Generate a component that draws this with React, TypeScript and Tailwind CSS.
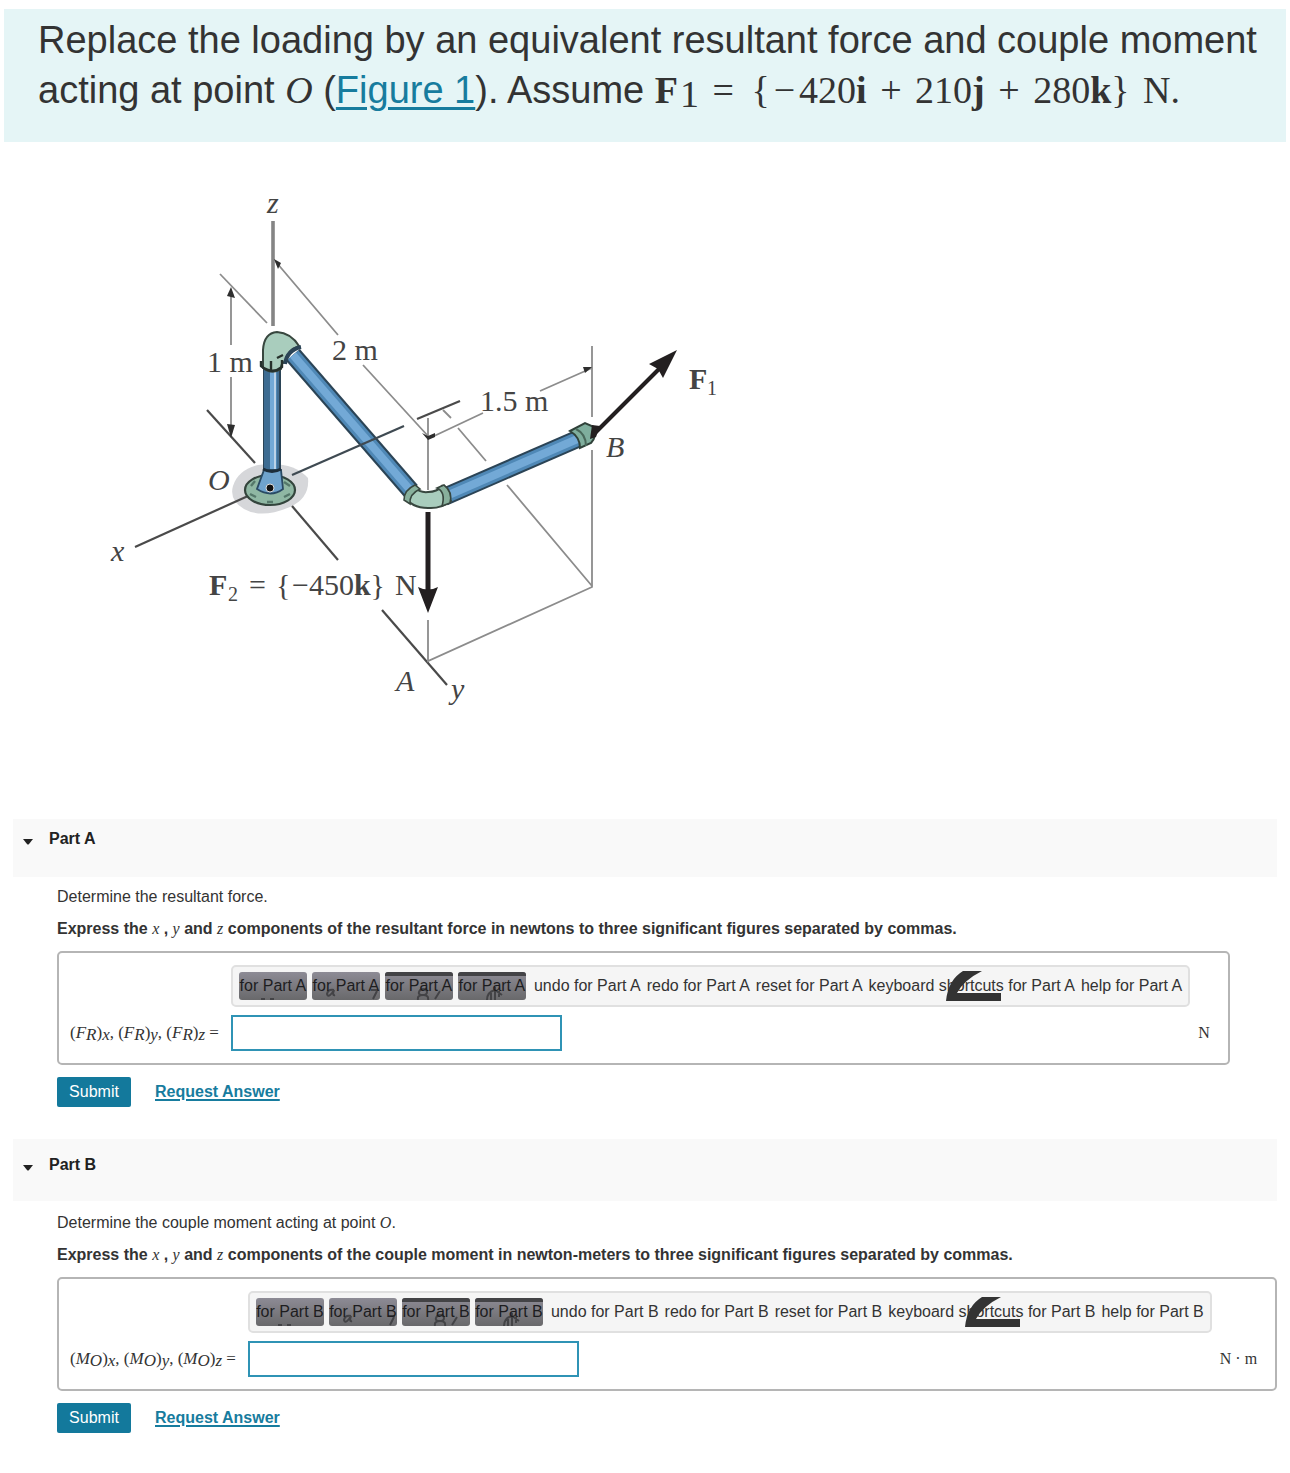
import React, { useState } from "react";

type Part = {
  id: string;
  prompt: React.ReactNode;
  quantity: string;
  units: string;
  symbol: string;
  sub: string;
  unit: string;
  headClass: string;
  bodyClass: string;
};

const serif = "font-['Liberation_Serif',serif]";

const Var: React.FC<{ children: React.ReactNode }> = ({ children }) => (
  <i className="font-['Liberation_Serif',serif] font-normal">{children}</i>
);

// pipe drawn as an outlined thick line with a highlight on top
const Pipe: React.FC<{ x1: number; y1: number; x2: number; y2: number }> = (p) => (
  <g>
    <line {...p} stroke="#2b4456" strokeWidth="18" />
    <line {...p} stroke="#4f88b6" strokeWidth="14" />
    <line {...p} stroke="#73a9d6" strokeWidth="8" />
  </g>
);

const Figure = () => (
  <svg
    viewBox="100 180 630 540"
    className="ml-[100px] h-[540px] w-[630px]"
    role="img"
    aria-label="Figure 1"
    fontFamily="'Liberation Serif', serif"
    fontSize="30"
    fill="#444"
  >
    <path
      d="M233 486 Q238 470 258 465 Q292 460 308 478 Q310 498 290 507 Q262 519 244 509 Q229 500 233 486Z"
      fill="#d6d7da"
    />

    {/* axes */}
    <g stroke="#4a4a4a" strokeWidth="2.2" fill="none">
      <path d="M135 547 L248 496" />
      <path d="M292 506 L338 560" />
      <path d="M382 610 L447 685" />
      <path d="M207 410 L255 463" />
      <path d="M417 419 L460 401" />
    </g>
    <path d="M273 221 V326" stroke="#858585" strokeWidth="3.6" />

    {/* dimension and construction lines */}
    <g stroke="#8c8c8c" strokeWidth="1.8" fill="none">
      <path d="M220 274 L267 323" />
      <path d="M231 290 V345 M231 377 V432" />
      <path d="M276 262 L338 335 M363 365 L428 436" />
      <path d="M428 418 V490 M428 620 V661 L592 587 V450 M592 346 V417" />
      <path d="M432 437 L483 413 M540 391 L592 368" />
      <path d="M443 410 L451 418 M458 428 L486 461 M507 485 L592 586" />
    </g>
    <g fill="#2e2e2e">
      <path d="M231 287 L235 298 L227 296Z" />
      <path d="M231 438 L235 425 L227 424Z" />
      <path d="M274 259 L281 263 L278 269Z" />
      <path d="M592 367 L583 367 L585 373Z" />
      <path d="M422 433 L428 436 L435 433 L435 437 L428 440Z" />
    </g>

    <Pipe x1={272} y1={366} x2={272} y2={472} />
    <path d="M267 370 V470" stroke="#3d6c92" strokeWidth="6" />
    <path d="M275 370 V470" stroke="#bcd3e8" strokeWidth="2" />
    <path d="M278 370 V470" stroke="#426f95" strokeWidth="2" />
    <Pipe x1={293} y1={355} x2={411} y2={491} />
    <Pipe x1={444} y1={497} x2={582} y2={437} />
    <path d="M292 475 L404 426" stroke="#3f4a52" strokeWidth="2.2" />

    {/* top elbow */}
    <path
      d="M263 368 V350 Q264 333 277 332 Q291 333 299 346 Q287 350 285 362 Q281 362 281 369 Q272 375 263 368Z"
      fill="#a9cdbd"
      stroke="#38473f"
      strokeWidth="2"
    />
    <path d="M285 364 Q287 350 301 347" fill="none" stroke="#2b4456" strokeWidth="4" />
    <path
      d="M261 361 V366 Q272 375 282 367 V360 M271 361 V371 M277 358 L283 355"
      fill="none"
      stroke="#26312c"
      strokeWidth="2.4"
    />

    {/* floor flange */}
    <ellipse cx="270" cy="490" rx="25" ry="15" fill="#8fb7a3" stroke="#33443c" strokeWidth="2.2" />
    <path
      d="M251 486 L255 481 M250 494 L256 497 M284 497 L290 494 M284 482 L290 486 M267 502 H273"
      stroke="#55786a"
      strokeWidth="2.4"
    />
    <path d="M264 470 H281 L283 489 Q271 498 257 489Z" fill="#6fa3cd" stroke="#2a4a63" strokeWidth="1.8" />
    <path d="M263 469 Q272 474 281 469" fill="none" stroke="#1d2d3a" strokeWidth="3" />
    <circle cx="270" cy="488" r="4" fill="#111" stroke="#ddd" strokeWidth="1" />

    {/* lower elbow */}
    <path
      d="M414 487 Q420 493 428 492 Q437 492 442 486 L451 501 Q441 509 428 508 Q411 508 405 496Z"
      fill="#a9cdbd"
      stroke="#38473f"
      strokeWidth="2"
    />
    <path
      d="M415 485 Q404 490 404 500 L410 504 Q409 494 420 489Z M437 488 Q446 492 442 506 L450 503 Q453 492 444 485Z"
      fill="#88b09c"
      stroke="#38473f"
      strokeWidth="1.6"
    />

    {/* end cap at B */}
    <path
      d="M570 431 L585 423 L594 427 Q597 437 591 443 L580 448 Q580 437 570 431Z"
      fill="#7fae9d"
      stroke="#30423a"
      strokeWidth="2"
    />
    <path d="M576 429 Q586 434 586 446" fill="none" stroke="#49685a" strokeWidth="2" />

    {/* forces */}
    <g fill="#231f20" stroke="#231f20">
      <path d="M428 512 V590" strokeWidth="5" />
      <path d="M418 587 Q428 592 438 587 L428 613Z" strokeWidth="0" />
      <path d="M595 433 L662 366" strokeWidth="4" />
      <path d="M677 350 L649 364 L658 369 L663 378Z" strokeWidth="0" />
      <path d="M592 425 L600 426 L596 437 L590 439Z" strokeWidth="0" />
    </g>

    <g fontStyle="italic">
      <text x="267" y="213">z</text>
      <text x="111" y="561">x</text>
      <text x="208" y="490">O</text>
      <text x="606" y="457">B</text>
      <text x="396" y="691">A</text>
      <text x="451" y="699">y</text>
    </g>
    <text x="207" y="372">1 m</text>
    <text x="332" y="360">2 m</text>
    <text x="480" y="411">1.5 m</text>
    <text x="689" y="389" fontWeight="bold">F</text>
    <text x="707" y="395" fontSize="20">1</text>
    <text x="209" y="595" fontWeight="bold">F</text>
    <text x="228" y="601" fontSize="20">2</text>
    <text x="249" y="595">=</text>
    <text x="276" y="595">{"{"}</text>
    <text x="292" y="595">−450<tspan fontWeight="bold">k</tspan>{"}"}</text>
    <text x="395" y="595">N</text>
  </svg>
);

// leftovers of the template icons that show through the toolbar buttons
const marks = [
  <path d="M22 27 h4 M31 27 h4" />,
  <path d="M22 18 q-6 -1 -7 4 q1 4 5 -1 l2 -3 q-2 6 1 5 M59 18 h7 M65 19 l-4 8" />,
  <>
    <path d="M0 2 H68" strokeWidth="4" />
    <path d="M33 28 q-1 -5 5 -5 q6 0 5 5 M38 23 q-5 0 -4 -3 q1 -3 4 -3 q4 0 4 3 q0 3 -4 3 M55 19 l-5 8" />
  </>,
  <>
    <path d="M0 2 H68" strokeWidth="4" />
    <path d="M29 28 q0 -8 8 -10 l7 5 M37 15 v13 M33 28 v-7 M41 19 v6" />
  </>,
];

const Toolbar: React.FC<{ name: string }> = ({ name }) => (
  <div className="flex h-[42px] items-center rounded-[5px] border-2 border-[#e0e0e0] bg-[#f5f5f5] px-1.5 whitespace-nowrap text-[#333]">
    <div className="mr-2 flex gap-[5px]">
      {marks.map((mark, i) => (
        <button
          key={i}
          type="button"
          className="relative flex h-7 w-17 items-center justify-center overflow-hidden rounded-[3px] bg-linear-to-b from-[#8d8b95] to-[#69696b] text-[#1d1d1f]"
        >
          <svg
            viewBox="0 0 68 28"
            className="absolute inset-0 h-full w-full"
            fill="none"
            stroke="#434346"
            strokeWidth="2"
          >
            {mark}
          </svg>
          <span className="relative">for {name}</span>
        </button>
      ))}
    </div>
    <div className="flex gap-1.5">
      <button type="button">undo for {name}</button>
      <button type="button">redo for {name}</button>
      <button type="button">reset for {name}</button>
      <button type="button" className="relative">
        <svg viewBox="0 0 55 30" className="absolute -top-[3px] left-[77px] h-[30px] w-[55px]" fill="#333">
          <path d="M0 30 Q2 9 17 0 H36 Q18 9 11 22 H55 V30Z" />
        </svg>
        <span className="relative">keyboard shortcuts for {name}</span>
      </button>
      <button type="button">help for {name}</button>
    </div>
  </div>
);

const Component: React.FC<{ symbol: string; sub: string; axis: string }> = ({ symbol, sub, axis }) => (
  <>
    (<i>{symbol}</i>
    <i className="relative top-0.5">{sub}</i>)<i className="relative top-0.5">{axis}</i>
  </>
);

const PartSection: React.FC<{ part: Part }> = ({ part }) => {
  const [open, setOpen] = useState(true);
  const [answer, setAnswer] = useState("");
  const name = "Part " + part.id;

  return (
    <section>
      <h2 className={part.headClass}>
        <button type="button" className="flex items-center gap-4 font-bold text-[#222]" onClick={() => setOpen(!open)}>
          <svg viewBox="0 0 10 6" className="mt-1.5 h-1.5 w-2.5" fill="#222">
            <path d="M0 0 H10 L6 5 Q5 6 4 5Z" />
          </svg>
          {name}
        </button>
      </h2>
      {open && (
        <div className={part.bodyClass}>
          <p className="mb-2">{part.prompt}</p>
          <p className="mb-2.5 font-bold">
            Express the <Var>x</Var> , <Var>y</Var> and <Var>z</Var> components of the {part.quantity} in {part.units} to
            three significant figures separated by commas.
          </p>
          <div className="grid w-fit grid-cols-[auto_auto_auto] items-center gap-y-2 rounded-[5px] border-2 border-[#b5b5b5] pt-3 pr-[18px] pb-3 pl-[11px]">
            <div className="col-start-2">
              <Toolbar name={name} />
            </div>
            <label
              htmlFor={"answer" + part.id}
              className={`${serif} col-start-1 pr-3 text-[17px] leading-6 whitespace-nowrap`}
            >
              <Component symbol={part.symbol} sub={part.sub} axis="x" />,{" "}
              <Component symbol={part.symbol} sub={part.sub} axis="y" />,{" "}
              <Component symbol={part.symbol} sub={part.sub} axis="z" /> =
            </label>
            <input
              id={"answer" + part.id}
              value={answer}
              onChange={(e) => setAnswer(e.target.value)}
              className="h-9 w-[331px] border-2 border-[#2f93b5] bg-white px-2 outline-none"
            />
            <span className={`${serif} pl-2 whitespace-nowrap`}>{part.unit}</span>
          </div>
          <div className="mt-3 flex items-center gap-6">
            <button type="button" className="h-[30px] w-[74px] rounded-xs bg-[#13799c] text-white">
              Submit
            </button>
            <a href="#" className="font-bold text-[#177c9e] underline decoration-2 underline-offset-2">
              Request Answer
            </a>
          </div>
        </div>
      )}
    </section>
  );
};

const parts: Part[] = [
  {
    id: "A",
    prompt: "Determine the resultant force.",
    quantity: "resultant force",
    units: "newtons",
    symbol: "F",
    sub: "R",
    unit: "N",
    headClass: "mb-2 bg-[#f9f9f9] px-2.5 pt-2 pb-[26px]",
    bodyClass: "mb-8 px-11",
  },
  {
    id: "B",
    prompt: (
      <>
        Determine the couple moment acting at point <Var>O</Var>.
      </>
    ),
    quantity: "couple moment",
    units: "newton-meters",
    symbol: "M",
    sub: "O",
    unit: "N · m",
    headClass: "mb-2.5 bg-[#f9f9f9] px-2.5 pt-3.5 pb-6",
    bodyClass: "pl-11",
  },
];

const App = () => {
  return (
    <main className="bg-white pt-[9px] pb-9 font-['Liberation_Sans',sans-serif] text-base text-[#333]">
      <header className="mx-1 bg-[#e5f5f6] pt-1.5 pr-5 pb-[27px] pl-[34px] text-[38px] leading-[50px]">
        <p>
          Replace the loading by an equivalent resultant force and couple moment acting at point <Var>O</Var> (
          <a href="#figure" className="text-[#177c9e] underline decoration-3 underline-offset-4">
            Figure 1
          </a>
          ). Assume{" "}
          <span className={`${serif} whitespace-nowrap`}>
            <b>F</b>
            <span className="relative top-1 ml-0.5">1</span> <span className="mr-2 ml-1">=</span> {"{"}
            <span className="mx-1">−</span>420<b>i</b> <span className="mx-1">+</span> 210<b>j</b>{" "}
            <span className="mx-1">+</span> 280<b>k</b>
            <span className="mr-1">{"}"}</span> N.
          </span>
        </p>
      </header>
      <div id="figure" className="pt-[38px] pb-[99px]">
        <Figure />
      </div>
      <div className="mx-[13px]">
        {parts.map((part) => (
          <PartSection key={part.id} part={part} />
        ))}
      </div>
    </main>
  );
};

export default App;
